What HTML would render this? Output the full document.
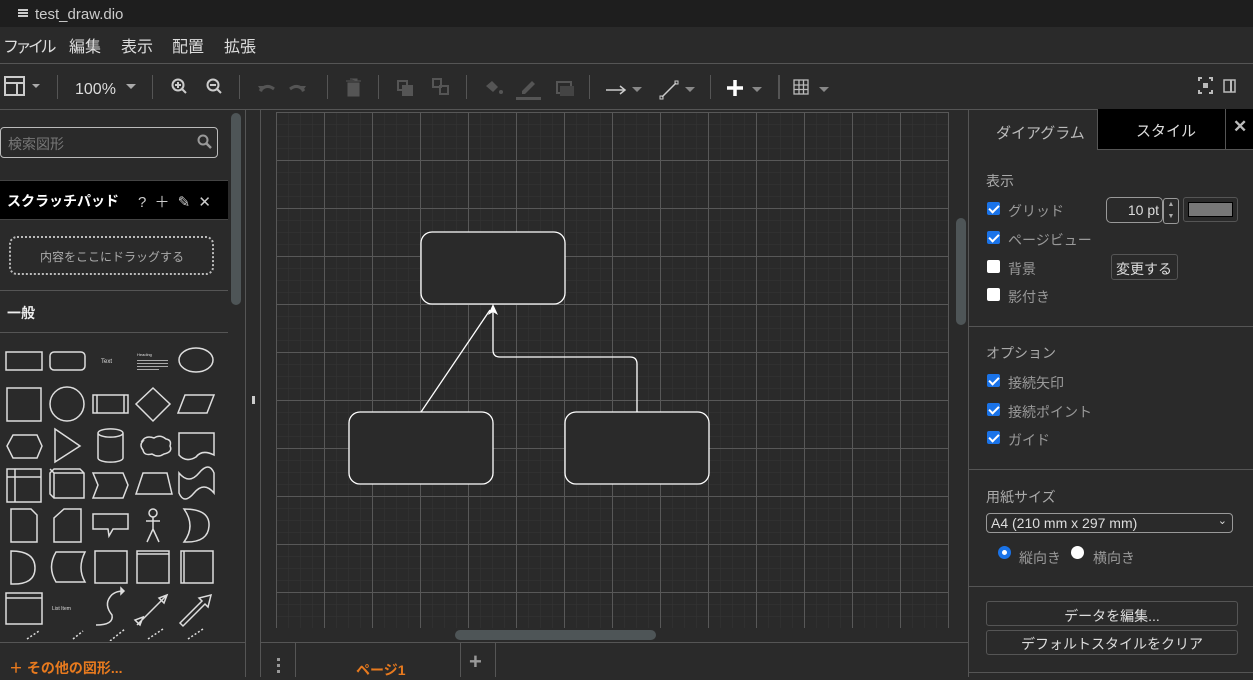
<!DOCTYPE html>
<html><head><meta charset="utf-8"><style>
*{box-sizing:border-box;margin:0;padding:0}
body{width:1253px;height:677px;overflow:hidden;background:#2a2a2a;font-family:"Liberation Sans","Noto Sans CJK JP",sans-serif;color:#ddd;position:relative}
.a{position:absolute}
.t{font-size:14px;color:#bbb}
.cb{position:absolute;width:13px;height:13px;border-radius:2px;background:#fff}
.cb.on{background:#1a73e8}
.cb.on::after{content:"";position:absolute;left:4px;top:1px;width:4px;height:8px;border:solid #fff;border-width:0 2px 2px 0;transform:rotate(45deg)}
.hl{position:absolute;height:1px;background:#555}
.vl{position:absolute;width:1px;background:#555}
.m{position:absolute;top:33px;font-size:16px;color:#ddd}
</style></head><body>
<div class="a" style="left:0;top:0;width:1253px;height:27px;background:#1e1e1e"></div>
<div class="a" style="left:18px;top:9px;width:10px;height:2px;background:#ccc;box-shadow:0 3px #ccc,0 6px #ccc"></div>
<div class="a" style="left:35px;top:6px;font-size:15px;color:#ccc">test_draw.dio</div>
<div class="m" style="left:3px;letter-spacing:-3.5px">ファイル</div><div class="m" style="left:69px">編集</div><div class="m" style="left:121px">表示</div><div class="m" style="left:172px">配置</div><div class="m" style="left:224px">拡張</div>
<div class="hl" style="left:0;top:63px;width:1253px"></div>
<div class="hl" style="left:0;top:109px;width:1253px"></div>
<!-- toolbar -->
<svg class="a" style="left:0;top:64px" width="1253" height="45">
<g stroke="#ccc" fill="none" stroke-width="2"><rect x="5" y="13" width="19" height="18"/><path d="M5 19h19M17 19v12"/></g>
<path d="M32 20l4 4 4-4z" fill="#aaa"/>
<g fill="#555"><rect x="57" y="11" width="1" height="24"/><rect x="152" y="11" width="1" height="24"/><rect x="239" y="11" width="1" height="24"/><rect x="327" y="11" width="1" height="24"/><rect x="378" y="11" width="1" height="24"/><rect x="466" y="11" width="1" height="24"/><rect x="589" y="11" width="1" height="24"/><rect x="710" y="11" width="1" height="24"/><rect x="778" y="11" width="2" height="24"/></g>
<text x="75" y="30" font-size="16" fill="#ddd" font-family="Liberation Sans">100%</text>
<path d="M126 20l5 5 5-5z" fill="#aaa"/>
<g stroke="#ccc" stroke-width="2" fill="none"><circle cx="178" cy="21" r="5.5"/><path d="M182 25l4 4M175 21h6M178 18v6"/><circle cx="213" cy="21" r="5.5"/><path d="M217 25l4 4M210 21h6"/></g>
<g stroke="#555" stroke-width="3" fill="none"><path d="M260 27q6-8 14-2M304 27q-6-8-14-2"/></g>
<path d="M258 22l4 6 2-6zM306 22l-4 6-2-6z" fill="#555"/>
<path d="M346 17h15M350 15h7v2M348 19h11v13h-11z" fill="#555" stroke="#555"/>
<g stroke="#555" stroke-width="2" fill="none"><rect x="398" y="17" width="9" height="9"/><rect x="403" y="22" width="9" height="9" fill="#555"/><rect x="433" y="15" width="8" height="8"/><rect x="440" y="22" width="8" height="8"/></g>
<path d="M486 22l6-5 6 6-5 5z" fill="#555"/><circle cx="501" cy="28" r="2" fill="#555"/>
<path d="M522 27l10-10 3 3-10 10h-3z" fill="#555"/><rect x="516" y="33" width="25" height="3" fill="#555"/>
<rect x="557" y="18" width="14" height="11" fill="none" stroke="#555" stroke-width="2"/><rect x="560" y="22" width="14" height="10" fill="#444"/>
<path d="M606 26h18" stroke="#ccc" stroke-width="1.5"/><path d="M620 22l5 4-5 4" stroke="#ccc" fill="none" stroke-width="1.5"/>
<path d="M632 23l5 5 5-5zM685 23l5 5 5-5zM752 23l5 5 5-5zM819 23l5 5 5-5z" fill="#888"/>
<path d="M662 33l14-14" stroke="#ccc" stroke-width="1.5"/><rect x="660" y="32" width="3" height="3" fill="none" stroke="#ccc"/><rect x="675" y="17" width="3" height="3" fill="none" stroke="#ccc"/>
<path d="M735 16v16M727 24h16" stroke="#fff" stroke-width="3.5"/>
<g stroke="#bbb" fill="none" stroke-width="1.3"><rect x="794" y="16" width="14" height="14"/><path d="M794 21h14M794 25.5h14M799 16v14M803.5 16v14"/></g>
<g stroke="#bbb" stroke-width="2" fill="none"><path d="M1199 17v-3h3M1209 14h3v3M1212 26v3h-3M1202 29h-3v-3"/><rect x="1203" y="19" width="5" height="5" fill="#bbb" stroke="none"/><rect x="1224" y="16" width="11" height="12" stroke-width="1.5"/><path d="M1231 16v12"/></g>
</svg>
<!-- left panel -->
<div class="a" style="left:0;top:127px;width:218px;height:31px;border:1px solid #bbb;border-radius:4px"></div>
<div class="a t" style="left:8px;top:134px;color:#777">検索図形</div>
<svg class="a" style="left:196px;top:133px" width="18" height="18"><circle cx="7" cy="7" r="4.5" stroke="#999" stroke-width="2" fill="none"/><path d="M10 10l5 5" stroke="#999" stroke-width="2.5"/></svg>
<div class="a" style="left:0;top:180px;width:228px;height:40px;background:#000;border-top:1px solid #444;border-bottom:1px solid #444"></div>
<div class="a" style="left:7px;top:191px;font-size:14px;font-weight:bold;color:#fff">スクラッチパッド</div>
<div class="a" style="left:138px;top:191px;font-size:15px;color:#ccc;word-spacing:4px">? ＋ ✎ ✕</div>
<div class="a" style="left:9px;top:236px;width:205px;height:39px;border:2px dotted #bbb;border-radius:8px"></div>
<div class="a" style="left:40px;top:248px;font-size:12px;color:#aaa">内容をここにドラッグする</div>
<div class="hl" style="left:0;top:290px;width:228px"></div>
<div class="a" style="left:7px;top:303px;font-size:14px;font-weight:bold;color:#eee">一般</div>
<div class="hl" style="left:0;top:332px;width:228px"></div>
<div class="a" style="left:231px;top:113px;width:10px;height:192px;background:#4e5557;border-radius:5px"></div>
<svg class="a" style="left:0;top:333px" width="228" height="308">
<g stroke="#ddd" stroke-width="1.5" fill="none">
<rect x="6" y="19" width="36" height="18"/><rect x="50" y="19" width="35" height="18" rx="4"/><ellipse cx="196" cy="27" rx="17" ry="12"/>
<rect x="7" y="55" width="34" height="33"/><circle cx="67" cy="71" r="17"/><rect x="93" y="62" width="35" height="18"/><path d="M97 62v18M124 62v18"/><path d="M153 55l17 16-17 17-17-17z"/><path d="M185 62h29l-7 18h-29z"/>
<path d="M13 102h24l5 11-5 12h-24l-6-12z"/><path d="M55 96l25 17-25 16z"/><path d="M98 100a12 4 0 0 1 25 0v25a12 4 0 0 1-25 0z M98 100a12 4 0 0 0 25 0"/><path d="M142 108q4-6 12-3q6-4 12 1q6 1 4 7q3 6-6 8q-6 4-12 0q-8 2-9-4q-4-5 0-9z"/><path d="M179 100h35v22q-12-6-18 2q-10 6-17-2z"/>
<rect x="7" y="136" width="34" height="33"/><path d="M7 144h34M15 136v33"/><path d="M50 140l4-4h26l4 4v25h-30l-4-4zM54 165v-25h30M54 140l-4-4"/><path d="M93 140h30l5 12-5 13h-30l5-13z"/><path d="M143 140h24l5 21h-36z"/><path d="M179 140q10 12 20 0t15 0v20q-10-12-20 0t-15 0z"/>
<path d="M11 176h20l6 6v27h-26z"/><path d="M64 176h17v33h-27v-24z"/><path d="M93 181h35v15h-15l-4 7-1-7h-15z"/><circle cx="153" cy="180" r="4"/><path d="M153 184v12M146 188h14M153 196l-6 13M153 196l6 13"/><path d="M184 176q26 0 25 17t-25 16q12-16 0-33z"/>
<path d="M11 218q24 0 24 17t-24 16z"/><path d="M56 219h29q-8 16 0 30h-29q-9-15 0-30z"/><rect x="95" y="218" width="32" height="32"/><rect x="137" y="218" width="32" height="32"/><path d="M137 221h32"/><rect x="181" y="218" width="32" height="32"/><path d="M184 218v32"/>
<rect x="6" y="260" width="36" height="31"/><path d="M6 265h36"/><path d="M96 292q18 0 16-10q-8-10-2-18q4-6 14-6"/><path d="M124 258l-3-3v6z" fill="#ddd"/><path d="M137 292l30-30M140 292l3-8-8 3zM167 262l-8 3 5 5z"/><path d="M180 290l22-22-3-3 12-3-3 12-3-3-22 22z"/>
<path d="M27 306l12-8M73 306l10-8M110 308l15-12M148 306l15-10M188 306l15-10" stroke-dasharray="2 2"/>
</g>
<text x="101" y="30" font-size="6" fill="#ddd">Text</text><text x="137" y="23" font-size="4" fill="#ddd">Heading</text>
<g fill="#aaa"><rect x="137" y="27" width="31" height="1"/><rect x="137" y="30" width="31" height="1"/><rect x="137" y="33" width="31" height="1"/><rect x="137" y="36" width="22" height="1"/></g>
<text x="52" y="277" font-size="5" fill="#ddd">List Item</text>
</svg>
<div class="hl" style="left:0;top:642px;width:245px"></div>
<div class="a" style="left:9px;top:658px;font-size:14px;font-weight:bold;color:#e87a1e">＋ その他の図形...</div>
<div class="vl" style="left:245px;top:109px;height:568px"></div>
<div class="vl" style="left:260px;top:109px;height:568px"></div>
<div class="a" style="left:252px;top:396px;width:3px;height:8px;background:#ccc"></div>
<!-- canvas -->
<svg class="a" style="left:276px;top:112px" width="673" height="516">
<defs>
<pattern id="mi" width="12" height="12" patternUnits="userSpaceOnUse"><path d="M0 0h12M0 0v12" stroke="#353535" stroke-width="1" fill="none"/></pattern>
<pattern id="ma" width="48" height="48" patternUnits="userSpaceOnUse"><rect width="48" height="48" fill="url(#mi)"/><path d="M0 .5h48M.5 0v48" stroke="#585858" stroke-width="1" fill="none"/></pattern>
</defs>
<rect width="673" height="516" fill="#2a2a2a"/><rect width="673" height="516" fill="url(#ma)"/>
</svg>
<svg class="a" style="left:0;top:0" width="1253" height="677">
<g stroke="#fff" stroke-width="1.3" fill="#2a2a2a">
<rect x="421" y="232" width="144" height="72" rx="11"/><rect x="349" y="412" width="144" height="72" rx="11"/><rect x="565" y="412" width="144" height="72" rx="11"/>
<path d="M421 412l69-102" fill="none"/><path d="M637 412v-48q0-7-7-7h-130q-7 0-7-7v-40" fill="none"/>
</g>
<path d="M493 304l-5 11 5-3 5 3z" fill="#fff"/>
</svg>
<div class="a" style="left:956px;top:218px;width:10px;height:107px;background:#4e5557;border-radius:5px"></div>
<div class="a" style="left:455px;top:630px;width:201px;height:10px;background:#4e5557;border-radius:5px"></div>
<div class="hl" style="left:260px;top:642px;width:708px"></div>
<div class="vl" style="left:295px;top:642px;height:35px"></div>
<div class="vl" style="left:460px;top:642px;height:35px"></div>
<div class="vl" style="left:495px;top:642px;height:35px"></div>
<div class="a" style="left:277px;top:658px;width:3px;height:3px;background:#999;box-shadow:0 6px #999,0 12px #999"></div>
<div class="a" style="left:356px;top:660px;font-size:14px;font-weight:bold;color:#e87a1e">ページ1</div>
<div class="a" style="left:469px;top:649px;font-size:22px;font-weight:bold;color:#999">+</div>
<!-- right panel -->
<div class="vl" style="left:968px;top:109px;height:568px"></div>
<div class="a" style="left:1097px;top:109px;width:156px;height:41px;background:#000;border-left:1px solid #555;border-bottom:1px solid #555"></div>
<div class="vl" style="left:1225px;top:109px;height:41px"></div>
<div class="a" style="left:996px;top:122px;font-size:15px;color:#bbb">ダイアグラム</div>
<div class="a" style="left:1136px;top:120px;font-size:15px;color:#ddd">スタイル</div>
<div class="a" style="left:1233px;top:117px;font-size:17px;font-weight:bold;color:#bbb">✕</div>
<div class="a t" style="left:986px;top:171px;color:#aaa">表示</div>
<div class="cb on" style="left:987px;top:202px"></div><div class="a t" style="left:1008px;top:201px;color:#999">グリッド</div>
<div class="cb on" style="left:987px;top:231px"></div><div class="a t" style="left:1008px;top:230px;color:#999">ページビュー</div>
<div class="cb" style="left:987px;top:260px"></div><div class="a t" style="left:1008px;top:259px;color:#999">背景</div>
<div class="cb" style="left:987px;top:288px"></div><div class="a t" style="left:1008px;top:287px;color:#999">影付き</div>
<div class="a" style="left:1106px;top:197px;width:57px;height:26px;border:1px solid #999;border-radius:5px;text-align:right;padding:4px 3px 0 0;font-size:14px;color:#ddd">10 pt</div>
<div class="a" style="left:1163px;top:198px;width:16px;height:26px;border:1px solid #999;border-radius:3px;font-size:7px;color:#aaa;text-align:center;line-height:12px">▲<br>▼</div>
<div class="a" style="left:1183px;top:197px;width:55px;height:25px;border:1px solid #555;border-radius:3px;padding:4px"><div style="width:100%;height:100%;background:#777;border:1px solid #000"></div></div>
<div class="a" style="left:1111px;top:254px;width:67px;height:26px;border:1px solid #555;border-radius:3px;font-size:14px;color:#ddd;padding:4px 0 0 4px">変更する</div>
<div class="hl" style="left:968px;top:326px;width:285px"></div>
<div class="a t" style="left:986px;top:343px;color:#aaa">オプション</div>
<div class="cb on" style="left:987px;top:374px"></div><div class="a t" style="left:1008px;top:373px;color:#999">接続矢印</div>
<div class="cb on" style="left:987px;top:403px"></div><div class="a t" style="left:1008px;top:402px;color:#999">接続ポイント</div>
<div class="cb on" style="left:987px;top:431px"></div><div class="a t" style="left:1008px;top:430px;color:#999">ガイド</div>
<div class="hl" style="left:968px;top:469px;width:285px"></div>
<div class="a t" style="left:986px;top:487px;color:#aaa">用紙サイズ</div>
<div class="a" style="left:986px;top:513px;width:247px;height:20px;border:1px solid #999;border-radius:4px;font-size:14px;color:#ddd;padding:1px 0 0 4px">A4 (210 mm x 297 mm)<span style="position:absolute;right:5px;top:0;font-size:11px">⌄</span></div>
<div class="a" style="left:998px;top:546px;width:13px;height:13px;border-radius:50%;border:4px solid #1a73e8;background:#fff"></div>
<div class="a t" style="left:1019px;top:548px;color:#999">縦向き</div>
<div class="a" style="left:1071px;top:546px;width:13px;height:13px;border-radius:50%;background:#fff"></div>
<div class="a t" style="left:1093px;top:548px;color:#999">横向き</div>
<div class="hl" style="left:968px;top:586px;width:285px"></div>
<div class="a" style="left:986px;top:601px;width:252px;height:25px;border:1px solid #555;border-radius:3px;text-align:center;font-size:14px;color:#ddd;padding-top:4px">データを編集...</div>
<div class="a" style="left:986px;top:630px;width:252px;height:25px;border:1px solid #555;border-radius:3px;text-align:center;font-size:14px;color:#ddd;padding-top:3px">デフォルトスタイルをクリア</div>
<div class="hl" style="left:968px;top:672px;width:285px"></div>
</body></html>
